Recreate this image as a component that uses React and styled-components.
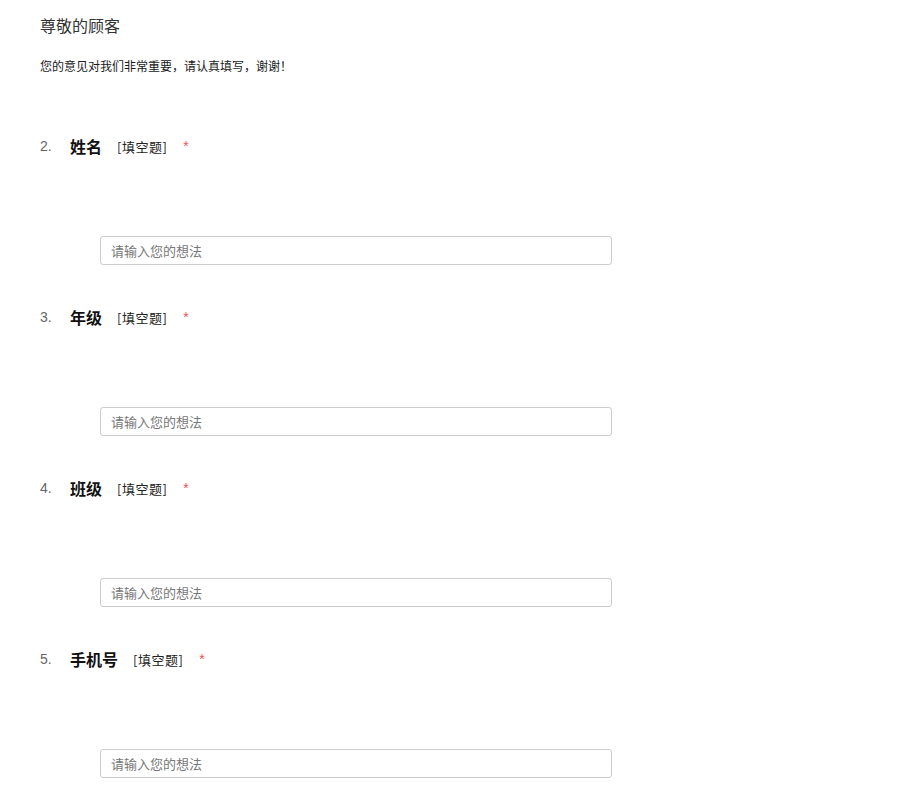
import React from 'react';
import styled, { createGlobalStyle } from 'styled-components';

const GlobalStyle = createGlobalStyle`
  body {
    margin: 0;
    background: #fff;
    font-family: "Noto Sans CJK SC", "Liberation Sans", sans-serif;
  }
`;

const Page = styled.div`
  padding: 15px 0 20px 40px;
  width: 860px;
  box-sizing: border-box;
`;

const Title = styled.div`
  font-size: 16px;
  line-height: 20px;
  color: #333;
`;

const Intro = styled.div`
  margin-top: 22px;
  font-size: 12px;
  line-height: 18px;
  color: #1a1a1a;
`;

const Question = styled.div`
  margin-top: ${(p) => (p.first ? '61px' : '42px')};
`;

const Head = styled.div`
  display: flex;
  align-items: center;
  height: 20px;
`;

const Num = styled.span`
  width: 30px;
  font-size: 14px;
  color: #666;
  font-family: "Liberation Sans", "Noto Sans CJK SC", sans-serif;
`;

const Name = styled.span`
  font-size: 16px;
  font-weight: bold;
  color: #111;
`;

const Kind = styled.span`
  margin-left: 15px;
  font-size: 13px;
  letter-spacing: 0.5px;
  color: #222;
`;

const Star = styled.span`
  margin-left: 16px;
  font-size: 14px;
  color: #f25555;
  font-family: "Liberation Sans", sans-serif;
`;

const Field = styled.input`
  display: block;
  margin: 80px 0 0 60px;
  width: 512px;
  height: 29px;
  box-sizing: border-box;
  border: 1px solid #ccc;
  border-radius: 3px;
  padding: 0 10px;
  font-size: 13px;
  font-family: "Noto Sans CJK SC", sans-serif;
  color: #333;
  outline: none;
  &::placeholder {
    color: #777;
  }
`;

const questions = [
  { no: 2, name: '姓名' },
  { no: 3, name: '年级' },
  { no: 4, name: '班级' },
  { no: 5, name: '手机号' },
];

export default function App() {
  return (
    <Page>
      <GlobalStyle />
      <Title>尊敬的顾客</Title>
      <Intro>您的意见对我们非常重要，请认真填写，谢谢！</Intro>
      {questions.map((q, i) => (
        <Question key={q.no} first={i === 0}>
          <Head>
            <Num>{q.no}.</Num>
            <Name>{q.name}</Name>
            <Kind>[填空题]</Kind>
            <Star>*</Star>
          </Head>
          <Field placeholder="请输入您的想法" />
        </Question>
      ))}
    </Page>
  );
}
